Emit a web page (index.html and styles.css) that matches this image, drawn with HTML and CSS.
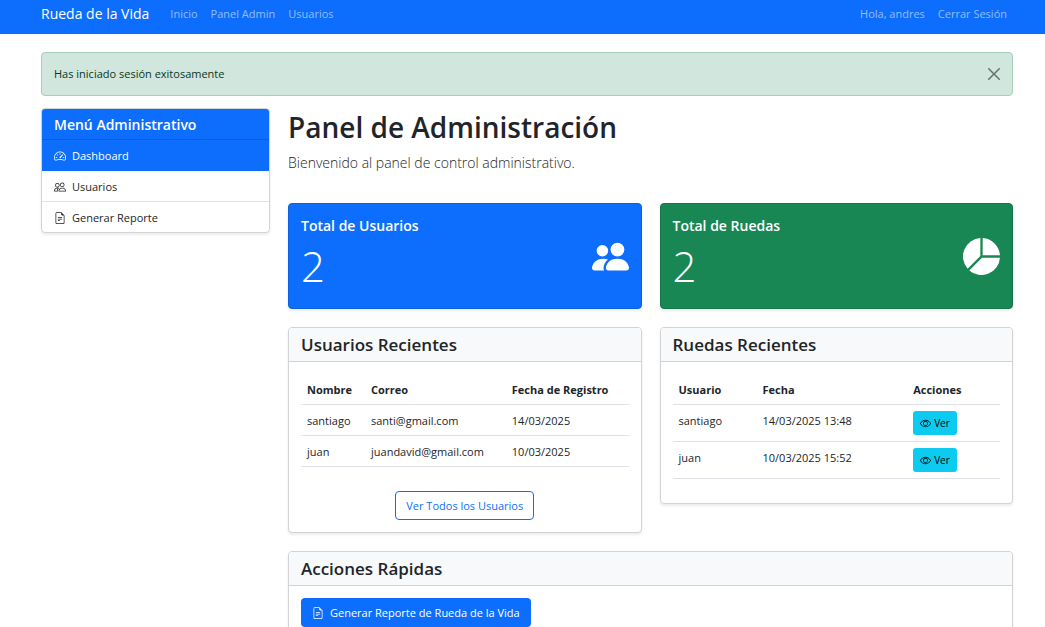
FILE: index.html
```html
<!DOCTYPE html>
<html lang="es">
<head>
<meta charset="utf-8">
<meta name="viewport" content="width=device-width, initial-scale=1">
<title>Rueda de la Vida</title>
<link rel="stylesheet" href="styles.css">
</head>
<body>
<svg class="sprite" aria-hidden="true">
  <symbol id="people-fill" viewBox="0 0 16 16"><path d="M7 14s-1 0-1-1 1-4 5-4 5 3 5 4-1 1-1 1zm4-6a3 3 0 1 0 0-6 3 3 0 0 0 0 6m-5.784 6A2.24 2.24 0 0 1 5 13c0-1.355.68-2.75 1.936-3.72A6.3 6.3 0 0 0 5 9c-4 0-5 3-5 4s1 1 1 1zM4.5 8a2.5 2.5 0 1 0 0-5 2.5 2.5 0 0 0 0 5"/></symbol>
  <symbol id="people" viewBox="0 0 16 16"><path d="M15 14s1 0 1-1-1-4-5-4-5 3-5 4 1 1 1 1zm-7.978-1L7 12.996c.001-.264.167-1.03.76-1.72C8.312 10.629 9.282 10 11 10c1.717 0 2.687.63 3.24 1.276.593.69.758 1.457.76 1.72l-.008.002-.014.002zM11 7a2 2 0 1 0 0-4 2 2 0 0 0 0 4m3-2a3 3 0 1 1-6 0 3 3 0 0 1 6 0M6.936 9.28a6 6 0 0 0-1.23-.247A7 7 0 0 0 5 9c-4 0-5 3-5 4q0 1 1 1h4.216A2.24 2.24 0 0 1 5 13c0-1.01.377-2.042 1.09-2.904.243-.294.526-.569.846-.816M4.92 10A5.5 5.5 0 0 0 4 13H1c0-.26.164-1.03.76-1.724.545-.636 1.492-1.256 3.16-1.275ZM1.5 5.5a3 3 0 1 1 6 0 3 3 0 0 1-6 0m3-2a2 2 0 1 0 0 4 2 2 0 0 0 0-4"/></symbol>
  <symbol id="speedometer" viewBox="0 0 16 16"><path d="M8 4a.5.5 0 0 1 .5.5V6a.5.5 0 0 1-1 0V4.5A.5.5 0 0 1 8 4M3.732 5.732a.5.5 0 0 1 .707 0l.915.914a.5.5 0 1 1-.708.708l-.914-.915a.5.5 0 0 1 0-.707M2 10a.5.5 0 0 1 .5-.5h1.586a.5.5 0 0 1 0 1H2.5A.5.5 0 0 1 2 10m9.5 0a.5.5 0 0 1 .5-.5h1.5a.5.5 0 0 1 0 1H12a.5.5 0 0 1-.5-.5m.754-4.246a.39.39 0 0 0-.527-.02L7.547 9.31a.91.91 0 1 0 1.302 1.258l3.434-4.297a.39.39 0 0 0-.029-.518z"/><path fill-rule="evenodd" d="M0 10a8 8 0 1 1 15.547 2.661c-.442 1.253-1.845 1.602-2.932 1.25C11.309 13.488 9.475 13 8 13c-1.474 0-3.31.488-4.615.911-1.087.352-2.49.003-2.932-1.25A8 8 0 0 1 0 10m8-7a7 7 0 0 0-6.603 9.329c.203.575.923.876 1.68.63C4.397 12.533 6.358 12 8 12s3.604.532 4.923.96c.757.245 1.477-.056 1.68-.631A7 7 0 0 0 8 3"/></symbol>
  <symbol id="file-text" viewBox="0 0 16 16"><path d="M5.5 7a.5.5 0 0 0 0 1h5a.5.5 0 0 0 0-1zM5 9.5a.5.5 0 0 1 .5-.5h5a.5.5 0 0 1 0 1h-5a.5.5 0 0 1-.5-.5m0 2a.5.5 0 0 1 .5-.5h2a.5.5 0 0 1 0 1h-2a.5.5 0 0 1-.5-.5"/><path d="M9.5 0H4a2 2 0 0 0-2 2v12a2 2 0 0 0 2 2h8a2 2 0 0 0 2-2V4.5zm0 1v2A1.5 1.5 0 0 0 11 4.5h2V14a1 1 0 0 1-1 1H4a1 1 0 0 1-1-1V2a1 1 0 0 1 1-1z"/></symbol>
  <symbol id="eye" viewBox="0 0 16 16"><path d="M16 8s-3-5.5-8-5.5S0 8 0 8s3 5.5 8 5.5S16 8 16 8M1.173 8a13 13 0 0 1 1.66-2.043C4.12 4.668 5.88 3.5 8 3.5s3.879 1.168 5.168 2.457A13 13 0 0 1 14.828 8q-.086.13-.195.288c-.335.48-.83 1.12-1.465 1.755C11.879 11.332 10.119 12.5 8 12.5s-3.879-1.168-5.168-2.457A13 13 0 0 1 1.172 8z"/><path d="M8 5.5a2.5 2.5 0 1 0 0 5 2.5 2.5 0 0 0 0-5M4.5 8a3.5 3.5 0 1 1 7 0 3.5 3.5 0 0 1-7 0"/></symbol>
  <symbol id="pie" viewBox="0 0 16 16"><path d="M15.985 8.5H8.207l-5.5 5.5a8 8 0 0 0 13.277-5.5zM2 13.292A8 8 0 0 1 7.5.015v7.778zM8.5.015V7.5h7.485A8 8 0 0 0 8.5.015"/></symbol>
  <symbol id="close" viewBox="0 0 16 16"><path d="M.293.293a1 1 0 0 1 1.414 0L8 6.586 14.293.293a1 1 0 1 1 1.414 1.414L9.414 8l6.293 6.293a1 1 0 0 1-1.414 1.414L8 9.414l-6.293 6.293a1 1 0 0 1-1.414-1.414L6.586 8 .293 1.707a1 1 0 0 1 0-1.414"/></symbol>
</svg>

<header class="navbar">
  <a class="brand" href="#">Rueda de la Vida</a>
  <nav class="nav">
    <a href="#">Inicio</a>
    <a href="#">Panel Admin</a>
    <a href="#">Usuarios</a>
  </nav>
  <div class="nav session">
    <span>Hola, andres</span>
    <a href="#">Cerrar Sesión</a>
  </div>
</header>

<div class="page">
  <div class="alert" role="alert">
    <span>Has iniciado sesión exitosamente</span>
    <button class="close" type="button" aria-label="Cerrar"><svg class="icon"><use href="#close"/></svg></button>
  </div>

  <div class="layout">
    <aside class="card menu">
      <h2 class="menu-title">Menú Administrativo</h2>
      <a class="menu-item active" href="#"><svg class="icon"><use href="#speedometer"/></svg>Dashboard</a>
      <a class="menu-item" href="#"><svg class="icon"><use href="#people"/></svg>Usuarios</a>
      <a class="menu-item" href="#"><svg class="icon"><use href="#file-text"/></svg>Generar Reporte</a>
    </aside>

    <main class="main">
      <h1 class="title">Panel de Administración</h1>
      <p class="lead">Bienvenido al panel de control administrativo.</p>

      <div class="row">
        <section class="card stat blue">
          <div>
            <h2 class="stat-title">Total de Usuarios</h2>
            <p class="stat-value">2</p>
          </div>
          <svg class="icon big"><use href="#people-fill"/></svg>
        </section>
        <section class="card stat green">
          <div>
            <h2 class="stat-title">Total de Ruedas</h2>
            <p class="stat-value">2</p>
          </div>
          <svg class="icon big"><use href="#pie"/></svg>
        </section>
      </div>

      <div class="row">
        <section class="card">
          <h2 class="card-header">Usuarios Recientes</h2>
          <div class="card-body">
            <table class="table users">
              <thead><tr><th>Nombre</th><th>Correo</th><th>Fecha de Registro</th></tr></thead>
              <tbody>
                <tr><td>santiago</td><td>santi@gmail.com</td><td>14/03/2025</td></tr>
                <tr><td>juan</td><td>juandavid@gmail.com</td><td>10/03/2025</td></tr>
              </tbody>
            </table>
            <div class="more"><a class="btn outline" href="#">Ver Todos los Usuarios</a></div>
          </div>
        </section>
        <section class="card">
          <h2 class="card-header">Ruedas Recientes</h2>
          <div class="card-body">
            <table class="table wheels">
              <thead><tr><th>Usuario</th><th>Fecha</th><th>Acciones</th></tr></thead>
              <tbody>
                <tr><td>santiago</td><td>14/03/2025 13:48</td><td class="action"><a class="btn info" href="#"><svg class="icon"><use href="#eye"/></svg>Ver</a></td></tr>
                <tr><td>juan</td><td>10/03/2025 15:52</td><td class="action"><a class="btn info" href="#"><svg class="icon"><use href="#eye"/></svg>Ver</a></td></tr>
              </tbody>
            </table>
          </div>
        </section>
      </div>

      <section class="card">
        <h2 class="card-header">Acciones Rápidas</h2>
        <div class="card-body">
          <a class="btn primary" href="#"><svg class="icon"><use href="#file-text"/></svg>Generar Reporte de Rueda de la Vida</a>
        </div>
      </section>
    </main>
  </div>
</div>
</body>
</html>
```
FILE: styles.css
```css
* { box-sizing: border-box; }
html { scrollbar-width: none; }
body {
  margin: 0;
  font: 11px/18px "Open Sans", "Noto Sans", sans-serif;
  color: #212529;
  background: #fff;
}
h1, h2, p { margin: 0; }
a { text-decoration: none; color: inherit; }
.sprite { display: none; }
.icon { width: 12px; height: 12px; fill: currentColor; flex: none; }

.navbar {
  display: flex;
  align-items: center;
  padding: 3px 38px 9px 41px;
  background: #0d6efd;
}
.brand { font-size: 14px; line-height: 22px; color: #fff; margin-right: 21px; }
.nav { display: flex; gap: 13px; color: rgba(255, 255, 255, .55); }
.session { margin-left: auto; }

.page { padding: 18px 32px 18px 41px; }

.alert {
  display: flex;
  align-items: center;
  justify-content: space-between;
  padding: 12px;
  margin-bottom: 12px;
  border: 1px solid #a3cfbb;
  border-radius: 4px;
  background: #d1e7dd;
  color: #0a3622;
}
.close { display: flex; padding: 0; border: 0; background: none; color: #000; opacity: .5; }

.layout { display: grid; grid-template-columns: minmax(0, 229fr) minmax(0, 725fr); gap: 18px; align-items: start; }
.main { display: flex; flex-direction: column; gap: 18px; }
.row { display: grid; grid-template-columns: repeat(2, minmax(0, 1fr)); gap: 18px; align-items: start; }

.card {
  border: 1px solid #d2d3d4;
  border-radius: 4px;
  background: #fff;
  box-shadow: 0 2px 3px rgba(0, 0, 0, .08);
  overflow: hidden;
}
.card-header {
  padding: 6px 12px;
  border-bottom: 1px solid #d2d3d4;
  background: #f8f9fa;
  font-size: 17px;
  font-weight: 600;
  line-height: 21px;
}
.card-body { padding: 12px; }

.menu-title {
  padding: 6px 12px 4px;
  border-bottom: 1px solid #0b5ed7;
  background: #0d6efd;
  color: #fff;
  font-size: 14px;
  font-weight: 600;
  line-height: 20px;
}
.menu-item {
  display: flex;
  align-items: center;
  gap: 6px;
  padding: 6px 12px 4px;
  border-bottom: 1px solid #dee2e6;
  line-height: 20px;
}
.menu-item:last-child { border-bottom: 0; }
.menu-item.active { background: #0d6efd; border-color: #0d6efd; color: #fff; }

.title { font-size: 28px; font-weight: 600; line-height: 38px; }
.lead { margin: -12px 0 11px; font-size: 14px; font-weight: 300; line-height: 22px; }

.stat {
  display: flex;
  align-items: center;
  justify-content: space-between;
  padding: 12px;
  color: #fff;
}
.blue { background: #0d6efd; border-color: #0c60dc; }
.green { background: #198754; border-color: #187549; }
.stat-title { font-size: 14px; font-weight: 600; line-height: 20px; margin-bottom: 4px; }
.stat-value { font-size: 42px; font-weight: 300; line-height: 52px; padding-bottom: 4px; }
.big { width: 37px; height: 37px; }

.table { width: 100%; margin-bottom: 12px; border-collapse: separate; border-spacing: 0; table-layout: fixed; line-height: 20px; }
.table th, .table td { padding: 6px 6px 4px; border-bottom: 1px solid #dee2e6; text-align: left; vertical-align: top; white-space: nowrap; }
.table th { font-weight: 700; }
.table .action { padding-bottom: 6px; }
.users th:nth-child(1) { width: 64px; }
.users th:nth-child(2) { width: 43%; }
.wheels th:nth-child(1) { width: 84px; }
.wheels th:nth-child(2) { width: 46%; }

.more { display: flex; justify-content: center; padding-top: 12px; }
.btn {
  display: inline-flex;
  align-items: center;
  gap: 6px;
  padding: 4px 10px;
  border: 1px solid transparent;
  border-radius: 4px;
  line-height: 19px;
  vertical-align: top;
  white-space: nowrap;
}
.outline { border-color: #0d6efd; color: #0d6efd; }
.primary { background: #0d6efd; color: #fff; }
.info { gap: 3px; padding: 3px 6px; border-radius: 3px; background: #0dcaf0; color: #000; font-size: 10px; line-height: 16px; }
.info .icon { width: 11px; height: 11px; }
```
